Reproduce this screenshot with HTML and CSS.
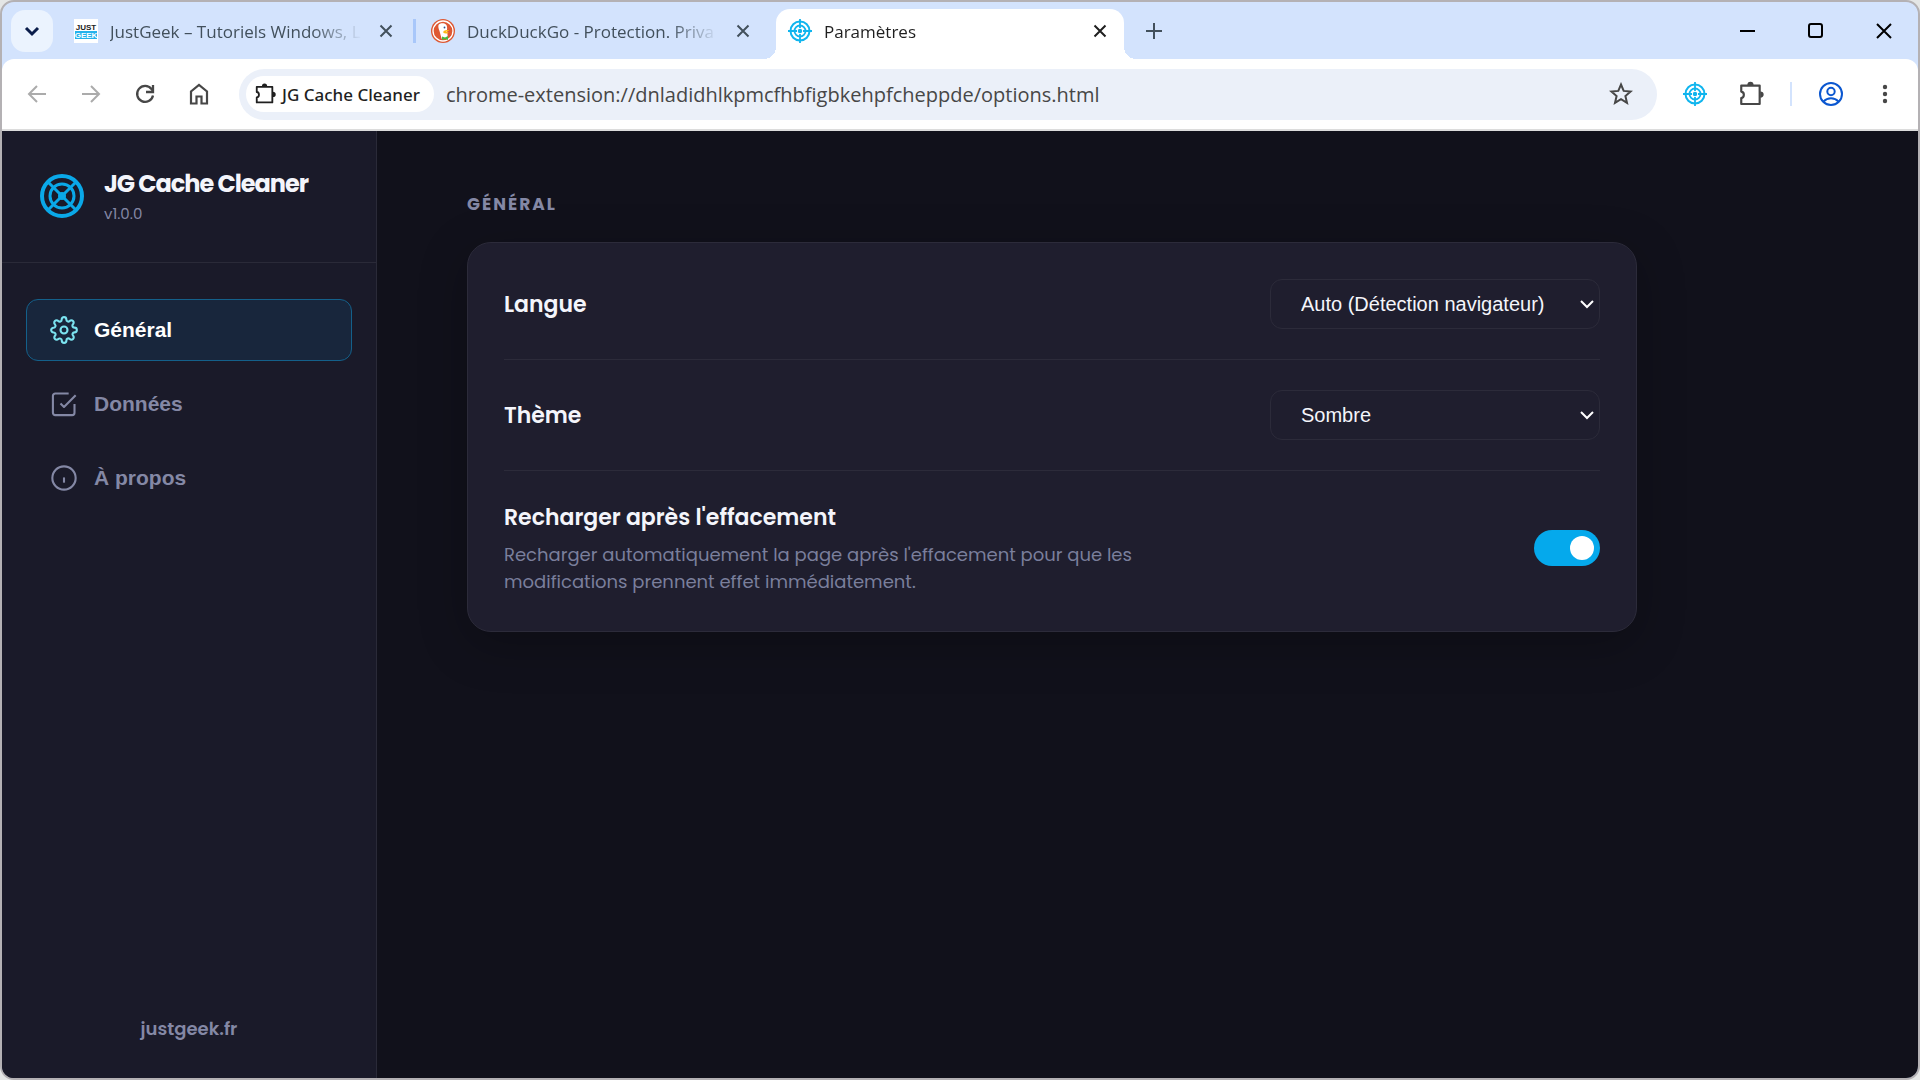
FILE: index.html
```html
<!doctype html>
<html lang="fr">
    <head>
        <meta charset="utf-8">
        <title>Paramètres</title>
        <link rel="stylesheet" href="styles.css">
    </head>
    <body>
        <svg class="defs" width="0" height="0">
            <symbol id="i-close" viewBox="0 0 24 24"><path d="M6.5 6.5l11 11M17.5 6.5l-11 11" fill="none" stroke="currentColor" stroke-width="2"/></symbol>
            <symbol id="i-target" viewBox="0 0 24 24">
                <g fill="none" stroke="currentColor">
                    <circle cx="12" cy="12" r="9.5" stroke-width="2"/>
                    <circle cx="12" cy="12" r="5.5" stroke-width="1.8"/>
                    <path d="M12 0v9M12 15v9M0 12h9M15 12h9" stroke-width="1.8"/>
                </g>
                <circle cx="12" cy="12" r="2.2" fill="currentColor"/>
            </symbol>
            <symbol id="i-puzzle" viewBox="0 0 24 24">
                <path d="M3 4.2h17v17H3v-5.4c3.2-.4 3.2-5.6 0-6z" fill="none" stroke="currentColor" stroke-width="2" stroke-linejoin="round"/>
                <path d="M8.6 3.8a2.9 3.2 0 0 1 5.8 0zM20.5 9.6a3.2 2.9 0 0 1 0 5.8z" fill="currentColor"/>
            </symbol>
        </svg>
        <div class="window">
            <!-- Tabs -->
            <header class="tabstrip">
                <button class="tab-search" aria-label="Rechercher dans les onglets">
                    <svg width="24" height="24" viewBox="0 0 24 24"><path d="M6 9l6 6 6-6" fill="none" stroke="currentColor" stroke-width="3"/></svg>
                </button>
                <div class="tab">
                    <svg class="favicon" viewBox="0 0 24 24">
                        <rect width="24" height="24" fill="#fff"/>
                        <rect x="1" y="12" width="22" height="8" fill="#25b2ec"/>
                        <text x="12" y="11" class="fav-text" fill="#222">JUST</text>
                        <text x="12" y="19" class="fav-text" fill="#fff">GEEK</text>
                    </svg>
                    <span class="tab-title">JustGeek – Tutoriels Windows, L</span>
                    <button class="tab-close" aria-label="Fermer"><svg width="24" height="24"><use href="#i-close"/></svg></button>
                </div>
                <i class="tab-sep"></i>
                <div class="tab">
                    <svg class="favicon" viewBox="0 0 24 24">
                        <circle cx="12" cy="12" r="12" fill="#de5833"/>
                        <circle cx="12" cy="12" r="10" fill="none" stroke="#fff" stroke-width="1.3"/>
                        <path d="M7.5 6c1-2 5.5-2.5 7.5-.5 1.2 1.2 1.3 3.5 1 5.5l.8 7.5c-2 1.6-4.3 1.9-6.2 1.3L8.5 12C7.6 9.5 7 7.5 7.5 6z" fill="#fff"/>
                        <circle cx="13.5" cy="8.5" r=".9" fill="#2d4f8e"/>
                        <path d="M12.5 12c2-1 4-1.3 5.5-.8-.5 1-2 1.3-3.2 1.5 1 .6 2 .6 3 .6-1 1.500-4 1.500-5.500.5z" fill="#fdb914"/>
                        <path d="M11 17.5l3 1 3-1.5v4l-3-1-3 1z" fill="#4cba3c"/>
                    </svg>
                    <span class="tab-title">DuckDuckGo - Protection. Priva</span>
                    <button class="tab-close" aria-label="Fermer"><svg width="24" height="24"><use href="#i-close"/></svg></button>
                </div>
                <i class="tab-sep hidden"></i>
                <div class="tab active">
                    <svg class="favicon blue"><use href="#i-target"/></svg>
                    <span class="tab-title">Paramètres</span>
                    <button class="tab-close" aria-label="Fermer"><svg width="24" height="24"><use href="#i-close"/></svg></button>
                </div>
                <button class="tab-new" aria-label="Nouvel onglet">
                    <svg width="24" height="24" viewBox="0 0 24 24"><path d="M12 4v16M4 12h16" stroke="currentColor" stroke-width="2"/></svg>
                </button>
                <div class="win-controls">
                    <button aria-label="Réduire"><svg width="18" height="18" viewBox="0 0 18 18"><path d="M1 9h15" stroke="currentColor" stroke-width="2"/></svg></button>
                    <button aria-label="Agrandir"><svg width="18" height="18" viewBox="0 0 18 18"><rect x="2" y="2" width="13" height="13" rx="2" fill="none" stroke="currentColor" stroke-width="2"/></svg></button>
                    <button aria-label="Fermer la fenêtre"><svg width="18" height="18" viewBox="0 0 18 18"><path d="M2 2l14 14M16 2L2 16" stroke="currentColor" stroke-width="2"/></svg></button>
                </div>
            </header>

            <!-- Toolbar -->
            <div class="toolbar-wrap">
                <div class="toolbar">
                    <button class="tool dim" aria-label="Retour"><svg width="24" height="24" viewBox="0 0 24 24"><path d="M21 12H5M12 4l-8 8 8 8" fill="none" stroke="currentColor" stroke-width="2"/></svg></button>
                    <button class="tool dim" aria-label="Avancer"><svg width="24" height="24" viewBox="0 0 24 24"><path d="M3 12h16M12 4l8 8-8 8" fill="none" stroke="currentColor" stroke-width="2"/></svg></button>
                    <button class="tool" aria-label="Actualiser"><svg width="24" height="24" viewBox="0 0 24 24"><path d="M20 13.5A8 8 0 1 1 18.5 7l1.5 2" fill="none" stroke="currentColor" stroke-width="2.3"/><path d="M20 3v7h-7" fill="none" stroke="currentColor" stroke-width="2.3"/></svg></button>
                    <button class="tool" aria-label="Accueil"><svg width="24" height="24" viewBox="0 0 24 24"><path d="M4 21.5V9.5L12 3l8 6.5v12h-5.5v-7h-5v7z" fill="none" stroke="currentColor" stroke-width="2.2"/></svg></button>
                    <div class="omnibox">
                        <span class="chip"><svg width="22" height="22"><use href="#i-puzzle"/></svg>JG Cache Cleaner</span>
                        <input class="url" aria-label="Adresse" value="chrome-extension://dnladidhlkpmcfhbfigbkehpfcheppde/options.html">
                        <button class="tool" aria-label="Favori"><svg width="24" height="24" viewBox="0 0 24 24"><path d="M12 2.5l2.7 6.4 6.9.6-5.2 4.6 1.6 6.7-6-3.6-6 3.6 1.6-6.7-5.2-4.6 6.9-.6z" fill="none" stroke="currentColor" stroke-width="2"/></svg></button>
                    </div>
                    <button class="tool blue" aria-label="JG Cache Cleaner"><svg width="24" height="24"><use href="#i-target"/></svg></button>
                    <button class="tool" aria-label="Extensions"><svg width="26" height="26"><use href="#i-puzzle"/></svg></button>
                    <i class="tool-sep"></i>
                    <button class="tool profile" aria-label="Profil"><svg width="24" height="24" viewBox="0 0 24 24"><g fill="none" stroke="currentColor" stroke-width="2"><circle cx="12" cy="12" r="11"/><circle cx="12" cy="9.5" r="3.7"/><path d="M4.5 19.5c4-4.3 11-4.3 15 0"/></g></svg></button>
                    <button class="tool" aria-label="Menu"><svg width="24" height="24" viewBox="0 0 24 24" fill="currentColor"><circle cx="12" cy="5" r="2.2"/><circle cx="12" cy="12" r="2.2"/><circle cx="12" cy="19" r="2.2"/></svg></button>
                </div>
            </div>

            <div class="app">
                <!-- Sidebar -->
                <aside class="sidebar">
                    <div class="brand">
                        <svg class="logo" width="44" height="44" viewBox="0 0 44 44">
                            <g fill="none" stroke="currentColor">
                                <circle cx="22" cy="22" r="20" stroke-width="4"/>
                                <circle cx="22" cy="22" r="12" stroke-width="3"/>
                                <path d="M8 8l28 28M36 8L8 36" stroke-width="3"/>
                            </g>
                            <circle cx="22" cy="22" r="4" fill="currentColor"/>
                        </svg>
                        <div>
                            <h1>JG Cache Cleaner</h1>
                            <p>v1.0.0</p>
                        </div>
                    </div>
                    <nav class="menu">
                        <button class="menu-item active">
                            <svg width="28" height="28" viewBox="0 0 24 24"><circle cx="12" cy="12" r="3"/><path d="M19.4 15a1.65 1.65 0 0 0 .33 1.82l.06.06a2 2 0 0 1 0 2.83 2 2 0 0 1-2.83 0l-.06-.06a1.65 1.65 0 0 0-1.82-.33 1.65 1.65 0 0 0-1 1.51V21a2 2 0 0 1-2 2 2 2 0 0 1-2-2v-.09A1.65 1.65 0 0 0 9 19.4a1.65 1.65 0 0 0-1.82.33l-.06.06a2 2 0 0 1-2.83 0 2 2 0 0 1 0-2.83l.06-.06a1.65 1.65 0 0 0 .33-1.82 1.65 1.65 0 0 0-1.51-1H3a2 2 0 0 1-2-2 2 2 0 0 1 2-2h.09A1.65 1.65 0 0 0 4.6 9a1.65 1.65 0 0 0-.33-1.82l-.06-.06a2 2 0 0 1 0-2.83 2 2 0 0 1 2.83 0l.06.06a1.65 1.65 0 0 0 1.82.33H9a1.65 1.65 0 0 0 1-1.51V3a2 2 0 0 1 2-2 2 2 0 0 1 2 2v.09a1.65 1.65 0 0 0 1 1.51 1.65 1.65 0 0 0 1.82-.33l.06-.06a2 2 0 0 1 2.83 0 2 2 0 0 1 0 2.83l-.06.06a1.65 1.65 0 0 0-.33 1.82V9a1.65 1.65 0 0 0 1.51 1H21a2 2 0 0 1 2 2 2 2 0 0 1-2 2h-.09a1.65 1.65 0 0 0-1.51 1z"/></svg>
                            Général
                        </button>
                        <button class="menu-item">
                            <svg width="28" height="28" viewBox="0 0 24 24"><path d="M9 11.5l3 3L22 4.5"/><path d="M21 12v7.5a2 2 0 0 1-2 2H4.5a2 2 0 0 1-2-2V5a2 2 0 0 1 2-2H16"/></svg>
                            Données
                        </button>
                        <button class="menu-item">
                            <svg width="28" height="28" viewBox="0 0 24 24"><circle cx="12" cy="12" r="10"/><path d="M12 11.5v4.5"/></svg>
                            À propos
                        </button>
                    </nav>
                    <a class="site-link" href="https://justgeek.fr">justgeek.fr</a>
                </aside>

                <!-- Settings -->
                <main class="content">
                    <h2>Général</h2>
                    <section class="card">
                        <div class="row">
                            <label class="row-title" for="lang">Langue</label>
                            <select id="lang">
                                <option>Auto (Détection navigateur)</option>
                                <option>Français</option>
                                <option>English</option>
                            </select>
                        </div>
                        <div class="row">
                            <label class="row-title" for="theme">Thème</label>
                            <select id="theme">
                                <option>Sombre</option>
                                <option>Clair</option>
                            </select>
                        </div>
                        <div class="row">
                            <div class="row-text">
                                <label class="row-title" for="reload">Recharger après l'effacement</label>
                                <p>Recharger automatiquement la page après l'effacement pour que les modifications prennent effet immédiatement.</p>
                            </div>
                            <input type="checkbox" class="toggle" id="reload" checked>
                        </div>
                    </section>
                </main>
            </div>
        </div>
    </body>
</html>
```
FILE: styles.css
```css
* { margin: 0; padding: 0; box-sizing: border-box; }

body {
    height: 100vh;
    background: #e4e6e6;
    font-family: Poppins, Inter, sans-serif;
}

button {
    border: none;
    background: none;
    color: inherit;
    display: flex;
    align-items: center;
    justify-content: center;
}

svg { display: block; flex: none; }
.defs { position: absolute; }
.blue { color: #10b5ee; }

.window {
    height: 100vh;
    display: flex;
    flex-direction: column;
    border: 2px solid #b4b1b4;
    border-radius: 14px;
    overflow: hidden;
    background: #d3e3fd;
}

/* Tabs */
.tabstrip {
    display: flex;
    align-items: center;
    height: 57px;
    padding-left: 9px;
    font-family: "Segoe UI", "Open Sans", sans-serif;
    font-size: 17px;
    color: #42505c;
}

.tab-search {
    width: 42px;
    height: 42px;
    margin-right: 9px;
    border-radius: 14px;
    background: #ebf3fe;
    color: #0a1c4a;
}

.tab {
    position: relative;
    display: flex;
    align-items: center;
    gap: 12px;
    flex: 0 1 348px;
    min-width: 0;
    height: 50px;
    padding: 0 12px 6px;
    align-self: flex-end;
}

.tab.active {
    background: #fff;
    color: #1f1f1f;
    border-radius: 14px 14px 0 0;
}

/* curved feet of the active tab */
.tab.active::before, .tab.active::after {
    content: "";
    position: absolute;
    bottom: 0;
    width: 12px;
    height: 12px;
}

.tab.active::before {
    right: 100%;
    background: radial-gradient(circle at 0 0, transparent 12px, #fff 12px);
}

.tab.active::after {
    left: 100%;
    background: radial-gradient(circle at 100% 0, transparent 12px, #fff 12px);
}

.favicon { width: 24px; height: 24px; }

.fav-text {
    font: 900 8px "Liberation Sans", sans-serif;
    text-anchor: middle;
}

.tab-title {
    flex: 1;
    overflow: hidden;
    white-space: nowrap;
    -webkit-mask-image: linear-gradient(90deg, #000 80%, transparent 100%);
    mask-image: linear-gradient(90deg, #000 80%, transparent 100%);
}

.tab-sep {
    width: 3px;
    height: 24px;
    margin: 0 3px;
    background: #a8c7fa;
}

.tab-sep.hidden { visibility: hidden; }

.tab-new { margin-left: 18px; width: 24px; }

.win-controls {
    margin-left: auto;
    display: flex;
    color: #000;
}

.win-controls button { width: 68px; height: 57px; }

/* Toolbar */
.toolbar-wrap { background: #d3e3fd; }

.toolbar {
    display: flex;
    align-items: center;
    height: 72px;
    padding: 0 6px 0 8px;
    background: #fff;
    border-bottom: 2px solid #dcdcdc;
    border-radius: 12px 12px 0 0;
    color: #474747;
}

.tool { width: 54px; height: 54px; }
.tool.dim { color: #ababab; }
.tool.blue { color: #10b5ee; margin-right: 2px; }
.tool.profile { color: #0b57d0; }

.tool-sep {
    width: 2px;
    height: 24px;
    margin: 0 12px;
    background: #d3e3fd;
}

.omnibox {
    flex: 1;
    min-width: 0;
    display: flex;
    align-items: center;
    height: 51px;
    margin: 0 11px 0 13px;
    padding: 0 9px 0 7px;
    border-radius: 26px;
    background: #ebf0f9;
    font-family: "Segoe UI", "Open Sans", sans-serif;
}

.chip {
    display: flex;
    align-items: center;
    gap: 6px;
    height: 36px;
    padding: 0 14px 0 8px;
    border-radius: 18px;
    background: #fff;
    color: #1f1f1f;
    font-family: "Segoe UI", "Noto Sans", sans-serif;
    font-size: 17px;
    font-weight: 500;
    white-space: nowrap;
}

.url {
    flex: 1;
    min-width: 0;
    margin-left: 12px;
    border: none;
    outline: none;
    background: none;
    font: inherit;
    font-size: 20px;
    color: #474747;
}

/* App */
.app {
    flex: 1;
    min-height: 0;
    display: flex;
    background: #11111b;
    color: #f4f5fb;
}

.sidebar {
    flex: none;
    width: 375px;
    display: flex;
    flex-direction: column;
    background: #1a1a29;
    border-right: 1px solid #2a2a38;
}

.brand {
    display: flex;
    align-items: center;
    gap: 20px;
    height: 132px;
    padding: 0 38px 1px;
    border-bottom: 1px solid #2a2a38;
}

.logo { color: #0aa8e8; }

.brand h1 {
    font-size: 24px;
    line-height: 36px;
    font-weight: 700;
    letter-spacing: -1px;
    white-space: nowrap;
}

.brand p {
    font-size: 15px;
    line-height: 24px;
    color: #8488a5;
}

.menu {
    flex: 1;
    display: flex;
    flex-direction: column;
    gap: 12px;
    padding: 36px 24px;
}

.menu-item {
    height: 62px;
    padding: 0 23px;
    gap: 16px;
    justify-content: flex-start;
    border: 1px solid transparent;
    border-radius: 12px;
    font: bold 21px Arial, "Liberation Sans", sans-serif;
    color: #8488a5;
}

.menu-item svg {
    fill: none;
    stroke: currentColor;
    stroke-width: 1.8;
    stroke-linejoin: round;
}

.menu-item.active {
    background: #18263c;
    border-color: #14608a;
    color: #fff;
}

.menu-item.active svg { color: #7be3f0; }

.site-link {
    padding: 36px 24px;
    font-size: 18px;
    line-height: 27px;
    font-weight: 600;
    text-align: center;
    text-decoration: none;
    color: #8488a5;
}

.content {
    flex: 1;
    min-width: 0;
    padding: 60px 90px;
}

.content h2 {
    margin-bottom: 24px;
    font-size: 17px;
    line-height: 27px;
    font-weight: 700;
    letter-spacing: 2px;
    text-transform: uppercase;
    color: #8488a5;
}

.card {
    max-width: 1170px;
    padding: 6px 36px;
    background: #1f1e2e;
    border: 1px solid #2c2b3a;
    border-radius: 24px;
    box-shadow: 0 12px 48px rgba(0, 0, 0, .25);
}

.row {
    display: flex;
    align-items: center;
    justify-content: space-between;
    gap: 24px;
    padding: 30px 0;
    border-bottom: 1px solid #2c2b3a;
}

.row:last-child { border-bottom: none; }

.row-title {
    display: block;
    font-size: 22px;
    line-height: 33px;
    font-weight: 600;
}

.row-text { max-width: 660px; }

.row-text p {
    margin-top: 7px;
    font-size: 18px;
    line-height: 27px;
    color: #7a7f9c;
}

select {
    appearance: none;
    width: 330px;
    height: 50px;
    padding: 0 50px 0 30px;
    border: 1px solid #2c2b3a;
    border-radius: 12px;
    background: #1f1e2e url("data:image/svg+xml,%3Csvg xmlns='http://www.w3.org/2000/svg' width='14' height='10'%3E%3Cpath d='M1 2l6 6 6-6' fill='none' stroke='white' stroke-width='2'/%3E%3C/svg%3E") no-repeat right 5px center;
    font: 20px Arial, "Liberation Sans", sans-serif;
    color: #f4f5fb;
    outline: none;
}

.toggle {
    appearance: none;
    flex: none;
    display: flex;
    align-items: center;
    width: 66px;
    height: 36px;
    padding: 0 6px;
    border-radius: 18px;
    background: #3a3a4c;
    cursor: pointer;
}

.toggle::before {
    content: "";
    width: 24px;
    height: 24px;
    border-radius: 50%;
    background: #fff;
}

.toggle:checked {
    justify-content: flex-end;
    background: #05a9ec;
}
```
